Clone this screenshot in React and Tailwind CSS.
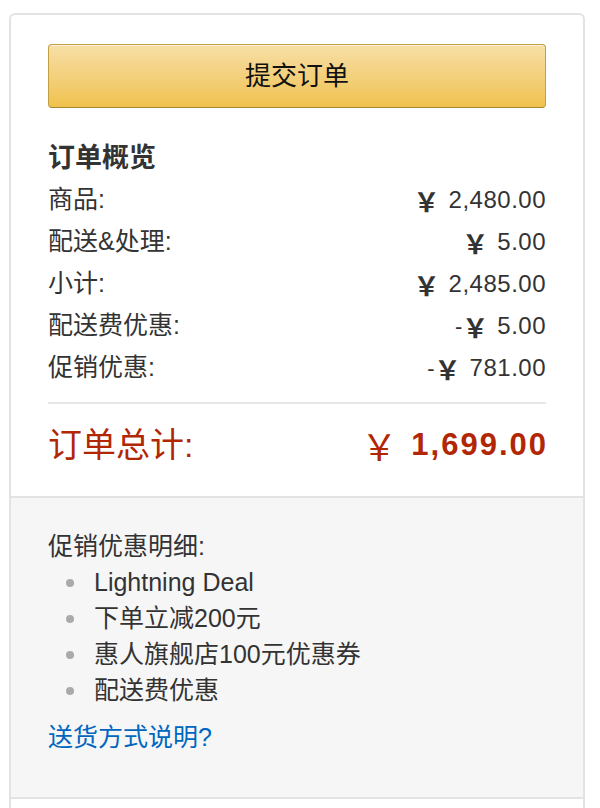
export default function App() {
  const rows = [
    ["商品:", "", "2,480.00"],
    ["配送&处理:", "", "5.00"],
    ["小计:", "", "2,485.00"],
    ["配送费优惠:", "-", "5.00"],
    ["促销优惠:", "-", "781.00"],
  ];
  const cjk = "font-['Liberation_Sans','Noto_Sans_CJK_SC',sans-serif]";
  return (
    <div className={`bg-white min-h-[808px] pt-[13px] pl-[9px] ${cjk}`}>
      <div className="w-[576px] h-[795px] border-2 border-b-0 border-[#e3e3e3] rounded-t-[6px] flex flex-col">
        <div className="px-[37px] pt-[29px] pb-[26px]">
          <button className="w-full h-[64px] rounded-[4px] border border-[#c09f45] border-b-[#a8862c] bg-gradient-to-b from-[#f7dfa5] to-[#f0c14b] text-[26px] text-[#111] shadow-[inset_0_1px_0_rgba(255,255,255,0.6)]">
            提交订单
          </button>
          <div className="mt-[29px] h-[42px] flex items-center text-[27px] font-bold text-[#333]">
            订单概览
          </div>
          {rows.map(([l, m, v]) => (
            <div key={l} className="h-[42px] flex items-center justify-between text-[25px] text-[#333]">
              <span>{l}</span>
              <span className="flex items-center">
                {m && <span className="text-[22px]">{m}</span>}
                <span className="font-['Noto_Sans_CJK_SC',sans-serif] text-[26px] font-bold">￥</span>
                <span className="ml-[9px] text-[24px] tracking-[0.5px]">{v}</span>
              </span>
            </div>
          ))}
          <div className="mt-[13px] border-t-2 border-[#e7e7e7]"></div>
          <div className="mt-[16px] h-[50px] flex items-center justify-between text-[#b12704] font-bold">
            <span className="text-[34px] font-normal">订单总计:</span>
            <span className="flex items-center">
              <span className="font-['Noto_Sans_CJK_SC',sans-serif] text-[36px] font-normal">￥</span>
              <span className="ml-[14px] text-[31px] tracking-[2px] mr-[-2px]">1,699.00</span>
            </span>
          </div>
        </div>
        <div className="border-t-2 border-b-2 border-[#e3e3e3] bg-[#f6f6f6] px-[37px] pt-[31px] pb-[41px] text-[25px] text-[#333]">
          <div className="h-[36px] flex items-center">促销优惠明细:</div>
          <ul>
            {["Lightning Deal", "下单立减200元", "惠人旗舰店100元优惠券", "配送费优惠"].map((t) => (
              <li key={t} className="h-[36px] flex items-center">
                <span className="ml-[18px] w-[8px] h-[8px] rounded-full bg-[#aaa]"></span>
                <span className="ml-[20px]">{t}</span>
              </li>
            ))}
          </ul>
          <div className="mt-[11px] h-[36px] flex items-center text-[#0066c0]">送货方式说明?</div>
        </div>
        <div className="flex-1"></div>
      </div>
    </div>
  );
}
